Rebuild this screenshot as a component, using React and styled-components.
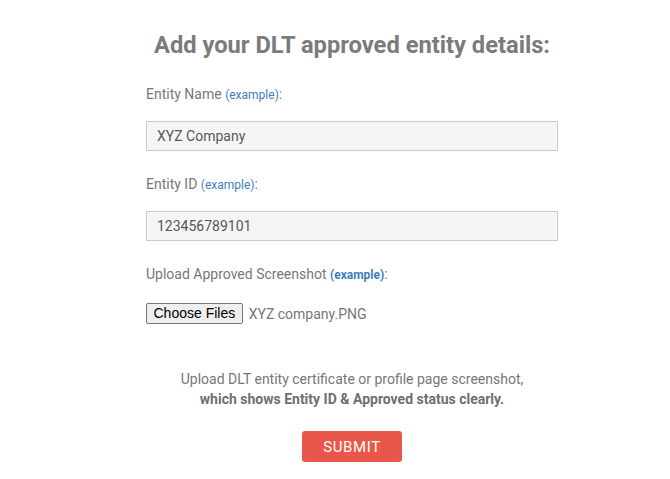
import React from "react";
import styled, { createGlobalStyle } from "styled-components";

const GlobalStyle = createGlobalStyle`
  html, body {
    margin: 0;
    padding: 0;
    background: #ffffff;
  }
  body {
    font-family: Roboto, "Liberation Sans", Arial, sans-serif;
  }
`;

const Page = styled.div`
  width: 670px;
  min-height: 479px;
  box-sizing: border-box;
  padding: 30px 0 0 146px;
`;

const Form = styled.form`
  width: 412px;
  display: flex;
  flex-direction: column;
`;

const Title = styled.h2`
  margin: 0 0 25px;
  text-align: center;
  font-size: 23.7px;
  line-height: 30px;
  font-weight: 700;
  color: #7b7b7b;
`;

const Field = styled.div`
  display: flex;
  flex-direction: column;
  margin-bottom: 24px;
`;

const Label = styled.label`
  font-size: 14px;
  line-height: 18px;
  color: #777;
  margin-bottom: 17px;
`;

const Example = styled.a`
  font-size: 12px;
  color: #3f7dbf;
  text-decoration: none;
  font-weight: ${(p) => (p.bold ? 700 : 400)};
`;

const TextInput = styled.input`
  box-sizing: border-box;
  width: 100%;
  height: 30px;
  padding: 0 10px;
  border: 1px solid #cccccc;
  border-radius: 0;
  background: #f5f5f5;
  font-family: Roboto, "Liberation Sans", Arial, sans-serif;
  font-size: 14px;
  color: #555;
  outline: none;
`;

const FileRow = styled.div`
  display: flex;
  align-items: center;
  gap: 6px;
  margin-top: 2px;
`;

const FileButton = styled.button`
  box-sizing: border-box;
  height: 21px;
  padding: 0 6.5px;
  border: 1px solid #767676;
  border-radius: 2px;
  background: #efefef;
  font-family: Arial, "Liberation Sans", sans-serif;
  font-size: 14px;
  line-height: 19px;
  color: #000;
`;

const FileName = styled.span`
  font-size: 14px;
  color: #777;
`;

const Note = styled.p`
  margin: 21px 0 0;
  text-align: center;
  font-size: 14px;
  line-height: 20px;
  color: #777;

  strong {
    font-weight: 700;
    color: #6f6f6f;
  }
`;

const Submit = styled.button`
  align-self: center;
  margin-top: 22px;
  width: 100px;
  height: 31px;
  border: none;
  border-radius: 3px;
  background: #e9574a;
  color: #fff;
  font-family: Roboto, "Liberation Sans", Arial, sans-serif;
  font-size: 15px;
  letter-spacing: 0.6px;
  cursor: pointer;
`;

export default function App() {
  return (
    <>
      <GlobalStyle />
      <Page>
        <Form onSubmit={(e) => e.preventDefault()}>
          <Title>Add your DLT approved entity details:</Title>
          <Field>
            <Label>
              Entity Name <Example href="#">(example)</Example>:
            </Label>
            <TextInput defaultValue="XYZ Company" />
          </Field>
          <Field>
            <Label>
              Entity ID <Example href="#">(example)</Example>:
            </Label>
            <TextInput defaultValue="123456789101" />
          </Field>
          <Field>
            <Label>
              Upload Approved Screenshot <Example href="#" bold>(example)</Example>:
            </Label>
            <FileRow>
              <FileButton type="button">Choose Files</FileButton>
              <FileName>XYZ company.PNG</FileName>
            </FileRow>
          </Field>
          <Note>
            Upload DLT entity certificate or profile page screenshot,
            <br />
            <strong>which shows Entity ID &amp; Approved status clearly.</strong>
          </Note>
          <Submit type="submit">SUBMIT</Submit>
        </Form>
      </Page>
    </>
  );
}
